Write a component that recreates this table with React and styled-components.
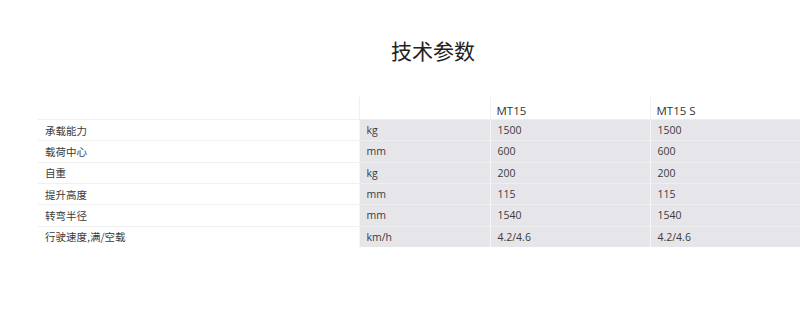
import React from 'react';
import styled, { createGlobalStyle } from 'styled-components';

const Global = createGlobalStyle`
    html, body {
        margin: 0;
        padding: 0;
        background: #fff;
        overflow: hidden;
    }
    body {
        font-family: "Open Sans", "Noto Sans CJK SC", sans-serif;
        color: #333;
    }
`;

const Page = styled.div`
    width: 790px;
    margin-left: 38px;
    padding-top: 35px;
`;

const Title = styled.h2`
    margin: 0 0 32px 0;
    text-align: center;
    font-family: "Noto Sans CJK SC", sans-serif;
    font-weight: 400;
    font-size: 21px;
    line-height: 30px;
    color: #222;
`;

const Table = styled.table`
    width: 790px;
    border-collapse: collapse;
    table-layout: fixed;
    font-size: 10.5px;
`;

const HeadCell = styled.th`
    height: 21px;
    padding: 0 6px;
    text-align: left;
    font-weight: 400;
    font-size: 11.5px;
    color: #333;
    border-left: ${p => (p.$first ? 'none' : '1px solid #f0f0f2')};
    vertical-align: bottom;
    padding-bottom: 1px;
`;

const Cell = styled.td`
    height: 20.33px;
    padding: 0 7px;
    white-space: nowrap;
    background: ${p => (p.$label ? '#fff' : '#e6e6ea')};
    border-top: 1px solid ${p => (p.$label ? '#f0f0f0' : '#eeeef1')};
    border-left: ${p => (p.$label ? 'none' : '1px solid #f6f6f8')};
    font-family: ${p => (p.$label ? '"Noto Sans CJK SC", sans-serif' : '"Open Sans", "Noto Sans CJK SC", sans-serif')};
    color: #3a3a3a;
`;

const rows = [
    ['承载能力', 'kg', '1500', '1500'],
    ['载荷中心', 'mm', '600', '600'],
    ['自重', 'kg', '200', '200'],
    ['提升高度', 'mm', '115', '115'],
    ['转弯半径', 'mm', '1540', '1540'],
    ['行驶速度,满/空载', 'km/h', '4.2/4.6', '4.2/4.6'],
];

export default function App() {
    return (
        <>
        <Global />
        <Page>
            <Title>技术参数</Title>
            <Table>
            <colgroup>
                <col style={{ width: 321 }} />
                <col style={{ width: 131 }} />
                <col style={{ width: 160 }} />
                <col />
            </colgroup>
            <thead>
                <tr>
                <HeadCell $first />
                <HeadCell />
                <HeadCell>MT15</HeadCell>
                <HeadCell>MT15 S</HeadCell>
                </tr>
            </thead>
            <tbody>
                {rows.map(r => (
                <tr key={r[0]}>
                    <Cell $label>{r[0]}</Cell>
                    <Cell>{r[1]}</Cell>
                    <Cell>{r[2]}</Cell>
                    <Cell>{r[3]}</Cell>
                </tr>
                ))}
            </tbody>
            </Table>
        </Page>
        </>
    );
}
